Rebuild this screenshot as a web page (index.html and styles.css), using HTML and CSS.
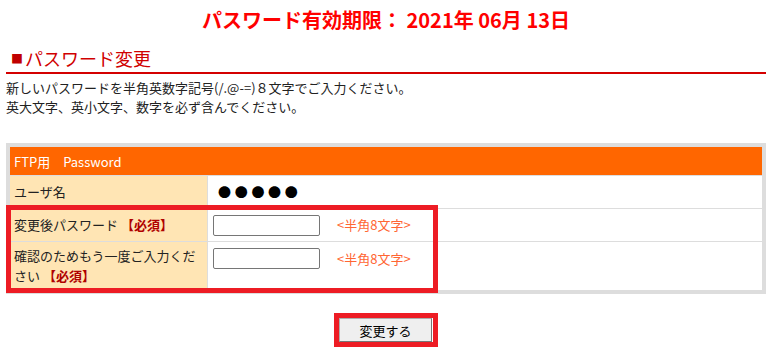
FILE: index.html
```html
<!DOCTYPE html>
<html lang="ja">
<head>
<meta charset="utf-8">
<title>パスワード変更</title>
<link rel="stylesheet" href="styles.css">
</head>
<body>
<div class="page">
  <h1 class="expire">パスワード有効期限： 2021年 06月 13日</h1>
  <h2 class="section"><span class="sq">■</span>パスワード変更</h2>
  <p class="note">新しいパスワードを半角英数字記号(/.@-=)８文字でご入力ください。<br>英大文字、英小文字、数字を必ず含んでください。</p>
  <div class="table-wrap">
    <table class="form-table">
      <tr>
        <th colspan="2" class="head">FTP用　Password</th>
      </tr>
      <tr class="r1">
        <td class="label">ユーザ名</td>
        <td class="value"><span class="dots">●●●●●</span></td>
      </tr>
      <tr class="r2">
        <td class="label">変更後パスワード <span class="req">【必須】</span></td>
        <td class="value"><div class="field"><input type="password" class="pw"><span class="hint">&lt;半角8文字&gt;</span></div></td>
      </tr>
      <tr class="r3">
        <td class="label"><span class="lbl-line">確認のためもう一度ご入力くだ</span><span class="lbl-line">さい <span class="req">【必須】</span></span></td>
        <td class="value"><div class="field"><input type="password" class="pw"><span class="hint">&lt;半角8文字&gt;</span></div></td>
      </tr>
    </table>
    <div class="mark"></div>
  </div>
  <div class="actions">
    <div class="btn-mark"><button class="submit">変更する</button></div>
  </div>
</div>
</body>
</html>
```
FILE: styles.css
```css
html, body {
  margin: 0;
  padding: 0;
  background: #fff;
}
body {
  font-family: "Noto Sans CJK JP", "Noto Sans", sans-serif;
  color: #222;
  font-size: 13px;
}
.page {
  padding: 6px 7px 0 6px;
}
.expire {
  margin: 0;
  height: 28px;
  line-height: 28px;
  font-size: 20px;
  font-weight: bold;
  color: #ff0000;
  text-align: center;
}
.section {
  margin: 12px 0 0 0;
  padding: 0 0 2px 5px;
  height: 24px;
  line-height: 24px;
  font-size: 18px;
  font-weight: normal;
  color: #d00000;
  border-bottom: 2px solid #d40000;
}
.sq {
  display: inline-block;
  font-size: 12px;
  color: #c00000;
  margin-right: 2px;
  vertical-align: 2px;
}
.note {
  margin: 4px 0 0 0;
  line-height: 19px;
  font-size: 13px;
  color: #222;
}
.table-wrap {
  position: relative;
  margin-top: 27px;
}
.form-table {
  width: 100%;
  border-collapse: separate;
  border-spacing: 1px;
  border: 3px solid #dddddd;
  background: #dddddd;
}
.form-table td, .form-table th {
  padding: 0;
}
.head {
  background: #ff6600;
  color: #fff;
  font-weight: normal;
  text-align: left;
  height: 28px;
  padding: 0 4px !important;
  font-size: 13px;
}
.label {
  width: 189px;
  background: #ffe5b4;
  padding: 0 4px !important;
  vertical-align: middle;
  line-height: 20px;
}
.lbl-line {
  display: block;
}
.value {
  background: #fff;
  padding: 0 5px !important;
  vertical-align: middle;
}
.r1 td { height: 32px; }
.r2 td { height: 32px; }
.r3 td { height: 48px; }
.r3 td.value {
  vertical-align: top;
  padding-top: 6px !important;
  height: 42px;
}
.dots {
  display: inline-block;
  margin-left: 5px;
  font-size: 13px;
  letter-spacing: 3.7px;
  color: #000;
  line-height: 20px;
}
.req {
  color: #b00000;
  font-weight: bold;
}
.field {
  display: flex;
  align-items: center;
  gap: 17px;
}
.pw {
  box-sizing: border-box;
  width: 107px;
  height: 21px;
  margin: 0;
  padding: 0;
  border: 1px solid #767676;
  border-radius: 2px;
}
.hint {
  color: #ff6633;
  font-size: 13px;
  line-height: 20px;
}
.mark {
  position: absolute;
  left: 0;
  top: 62px;
  width: 432px;
  height: 88px;
  box-sizing: border-box;
  border: 5px solid #ed1c24;
  pointer-events: none;
}
.actions {
  display: flex;
  justify-content: center;
  margin-top: 19px;
}
.btn-mark {
  border: 5px solid #ed1c24;
  display: flex;
  padding: 0 1px 0 0;
}
.submit {
  width: 93px;
  height: 24px;
  background: #efefef;
  border: 1px solid #adadad;
  border-right-color: #767676;
  border-bottom-color: #767676;
  font-family: "Noto Sans CJK JP", sans-serif;
  font-size: 13px;
  color: #000;
  padding: 0;
}
```
